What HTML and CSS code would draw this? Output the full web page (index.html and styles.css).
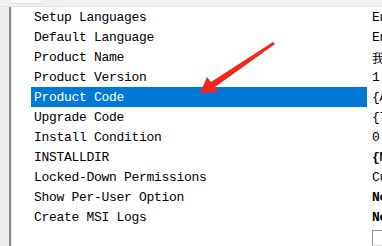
FILE: index.html
```html
<!DOCTYPE html>
<html lang="en">

<head>
    <meta charset="UTF-8">
    <title>General Information</title>
    <link rel="stylesheet" href="styles.css">
</head>

<body>
    <div class="top-strip">
        <div class="tab-edge"></div>
    </div>
    <div class="main">
        <div class="gutter"></div>
        <div class="panel">
            <div class="row"><span class="label">Setup Languages</span><span class="value">English (United States)</span></div>
            <div class="row"><span class="label">Default Language</span><span class="value">English (United States)</span></div>
            <div class="row"><span class="label">Product Name</span><span class="value cjk">我的产品</span></div>
            <div class="row"><span class="label">Product Version</span><span class="value">1.00.0000</span></div>
            <div class="row selected"><span class="label">Product Code</span><span class="value">{A0C1F2E3-0000}</span></div>
            <div class="row"><span class="label">Upgrade Code</span><span class="value">{7B2D9E41-0000}</span></div>
            <div class="row"><span class="label">Install Condition</span><span class="value">0 conditions</span></div>
            <div class="row"><span class="label">INSTALLDIR</span><span class="value bold">{MY_PRODUCT}</span></div>
            <div class="row"><span class="label">Locked-Down Permissions</span><span class="value">Custom</span></div>
            <div class="row"><span class="label">Show Per-User Option</span><span class="value bold">No</span></div>
            <div class="row"><span class="label">Create MSI Logs</span><span class="value bold">No</span></div>
            <div class="row"><span class="label"></span><span class="value"><span class="check"></span></span></div>
        </div>
    </div>

    <!-- annotation arrow drawn over the list -->
    <svg class="arrow" width="382" height="246" viewBox="0 0 382 246">
        <polygon points="200,93 207,77 211,82 273,42 275,44 215,87 219,92" fill="#f4261c" />
    </svg>
</body>

</html>
```

FILE: styles.css
```css
body {
    margin: 0;
    width: 382px;
    height: 246px;
    overflow: hidden;
    position: relative;
    background-color: #fff;
    font-family: "Liberation Mono", "Noto Sans CJK SC", monospace;
    font-size: 13px;
    letter-spacing: -0.3px;
    color: #000;
}

.top-strip {
    height: 6px;
    background-color: #f0f0f0;
    border-bottom: 1px solid #e2e2e2;
}

.tab-edge {
    margin-left: 12px;
    width: 29px;
    height: 3px;
    background-color: #fbfbfb;
    border-bottom: 1px solid #dadada;
}

.main {
    display: flex;
    height: 239px;
}

.gutter {
    width: 9px;
    background-color: #eeeeee;
    border-right: 2px solid #8a8a8a;
}

.panel {
    flex: 1;
    border-left: 1px solid #e6e6e6;
    overflow: hidden;
}

.row {
    display: flex;
    height: 20px;
    line-height: 19px;
    padding-left: 19px;
    white-space: nowrap;
}

.label {
    flex: 0 0 336px;
    box-sizing: border-box;
    padding: 1px 0 0 3px;
}

.value {
    padding: 1px 0 0 5px;
}

.value.cjk {
    font-family: "Noto Sans CJK SC", sans-serif;
    font-size: 12px;
}

.value.bold {
    font-weight: bold;
}

.selected .label {
    background-color: #0078d7;
    color: #fff;
}

.check {
    display: inline-block;
    width: 14px;
    height: 14px;
    margin-top: 2px;
    vertical-align: top;
    border: 1px solid #8f8f8f;
    border-right-color: #d6d6d6;
    border-bottom-color: #d6d6d6;
    background-color: #fff;
}

.arrow {
    position: absolute;
    top: 0;
    left: 0;
    pointer-events: none;
}
```
